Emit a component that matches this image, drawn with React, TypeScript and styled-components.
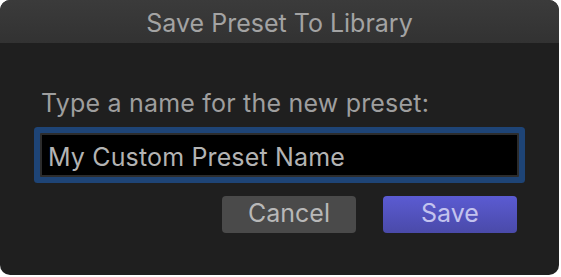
import React from "react";
import styled, { createGlobalStyle } from "styled-components";

const Global = createGlobalStyle`
  html, body { margin: 0; padding: 0; background: #ffffff; }
  body { font-family: Inter, "Noto Sans", sans-serif; -webkit-font-smoothing: antialiased; }
`;

const Window = styled.div`
  width: 559px;
  height: 275px;
  border-radius: 10px;
  overflow: hidden;
  background: #1f1f1f;
  display: flex;
  flex-direction: column;
  box-sizing: border-box;
`;

const TitleBar = styled.div`
  height: 43px;
  flex: none;
  background: linear-gradient(#3b3b3b, #323232);
  display: flex;
  align-items: flex-start;
  justify-content: center;
  color: #a3a3a3;
  font-size: 25px;
  line-height: 30px;
  padding-top: 8px;
  box-sizing: border-box;
`;

const Body = styled.div`
  flex: 1;
  display: flex;
  flex-direction: column;
  padding: 45px 40px 0 40px;
`;

const Label = styled.div`
  color: #9e9e9e;
  font-size: 25px;
  line-height: 30px;
  padding-left: 1px;
  letter-spacing: 0.2px;
`;

const Field = styled.input`
  margin-top: 15px;
  height: 44px;
  box-sizing: border-box;
  width: 100%;
  background: #000000;
  border: 2px solid #2c2c2c;
  border-radius: 1px;
  box-shadow: 0 0 0 6px #1e4476;
  outline: none;
  color: #b3b3b3;
  font-family: Inter, "Noto Sans", sans-serif;
  font-size: 25px;
  padding: 4px 7px 0 6px;
  letter-spacing: 0.15px;
`;

const Actions = styled.div`
  display: flex;
  justify-content: flex-end;
  gap: 27px;
  margin-top: 19px;
  padding-right: 2px;
`;

const Button = styled.button<{ $primary?: boolean }>`
  width: 134px;
  height: 37px;
  border: none;
  border-radius: 4px;
  font-family: Inter, "Noto Sans", sans-serif;
  font-size: 25px;
  line-height: 30px;
  padding: 0 0 3px;
  color: ${(p) => (p.$primary ? "#c3c3ee" : "#b8b8b8")};
  background: ${(p) =>
    p.$primary ? "linear-gradient(#5b5bd2, #4a4aa9)" : "#4a4a4a"};
`;

export default function App() {
  return (
    <>
      <Global />
      <Window>
        <TitleBar>Save Preset To Library</TitleBar>
        <Body>
          <Label>Type a name for the new preset:</Label>
          <Field defaultValue="My Custom Preset Name" />
          <Actions>
            <Button>Cancel</Button>
            <Button $primary>Save</Button>
          </Actions>
        </Body>
      </Window>
    </>
  );
}
